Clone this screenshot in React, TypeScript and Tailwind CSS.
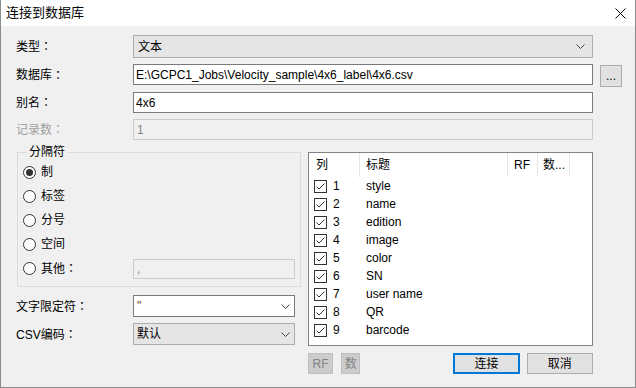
import React from "react";

const Chevron = () => (
  <svg width="9" height="5" viewBox="0 0 9 5" className="shrink-0">
    <path d="M0.5 0.5 L4.5 4.5 L8.5 0.5" fill="none" stroke="#444" strokeWidth="1" />
  </svg>
);

const C = () => <span className="font-['Noto_Sans_CJK_JP',sans-serif]">：</span>;

const Radio = ({ checked }: { checked?: boolean }) => (
  <span className="w-[13px] h-[13px] rounded-full border border-[#333] bg-white flex items-center justify-center shrink-0">
    {checked ? <span className="w-[7px] h-[7px] rounded-full bg-[#333]" /> : null}
  </span>
);

const Check = () => (
  <span className="w-[13px] h-[13px] border border-[#333] bg-white flex items-center justify-center shrink-0">
    <svg width="11" height="11" viewBox="0 0 11 11">
      <path d="M1.5 5.5 L4 8 L9.5 2.5" fill="none" stroke="#333" strokeWidth="1" />
    </svg>
  </span>
);

const rows = ["style", "name", "edition", "image", "color", "SN", "user name", "QR", "barcode"];

export default function App() {
  return (
    <div className="w-[636px] h-[388px] flex flex-col border-x border-b border-[#8c8c8c] bg-[#f0f0f0] text-[12px] text-black overflow-hidden font-['Liberation_Sans','Noto_Sans_CJK_SC',sans-serif]">
      {/* Title bar */}
      <div className="h-[26px] shrink-0 bg-white flex items-center justify-between pl-[5px] pr-[9px]">
        <span className="text-[13px] leading-[16px]">连接到数据库</span>
        <svg width="11" height="11" viewBox="0 0 11 11">
          <path d="M0.5 0.5 L10.5 10.5 M10.5 0.5 L0.5 10.5" stroke="#000" strokeWidth="1" fill="none" />
        </svg>
      </div>

      {/* Body */}
      <div className="flex-1 flex flex-col pl-[15px] pt-[9px]">
        {/* Type */}
        <div className="flex items-center h-[23px]">
          <div className="w-[117px] leading-[16px]">类型<C /></div>
          <div className="w-[460px] h-[23px] bg-[#e5e5e5] border border-[#adadad] flex items-center justify-between pl-[4px] pr-[7px]">
            <span className="leading-[16px]">文本</span>
            <Chevron />
          </div>
        </div>

        {/* Database */}
        <div className="flex items-start h-[22px] mt-[6px]">
          <div className="w-[117px] h-[21px] flex items-center leading-[16px]">数据库<C /></div>
          <div className="w-[460px] h-[21px] bg-white border border-[#7a7a7a] flex items-center pl-[2px]">
            <span className="leading-[16px]">E:\GCPC1_Jobs\Velocity_sample\4x6_label\4x6.csv</span>
          </div>
          <div className="ml-[7px] mt-[1px] w-[22px] h-[22px] bg-[#e1e1e1] border border-[#adadad] flex items-center justify-center leading-[12px]">
            ...
          </div>
        </div>

        {/* Alias */}
        <div className="flex items-center h-[21px] mt-[6px]">
          <div className="w-[117px] leading-[16px]">别名<C /></div>
          <div className="w-[460px] h-[21px] bg-white border border-[#7a7a7a] flex items-center pl-[2px]">
            <span className="leading-[16px]">4x6</span>
          </div>
        </div>

        {/* Record count */}
        <div className="flex items-center h-[21px] mt-[6px]">
          <div className="w-[117px] leading-[16px] text-[#a0a0a0]">记录数<C /></div>
          <div className="w-[460px] h-[21px] bg-[#f0f0f0] border border-[#cccccc] flex items-center pl-[3px]">
            <span className="leading-[16px] text-[#838383]">1</span>
          </div>
        </div>

        {/* Lower */}
        <div className="flex mt-[4px]">
          {/* Left column */}
          <div className="w-[285px] flex flex-col">
            <fieldset className="ml-[1px] w-[284px] border border-[#dcdcdc] pl-[5px] pr-[5px] pb-[6px]">
              <legend className="ml-[4px] px-[2px] leading-[16px]">分隔符</legend>
              <div className="flex items-center h-[24px]">
                <Radio checked />
                <span className="ml-[5px] leading-[16px]">制</span>
              </div>
              <div className="flex items-center h-[24px]">
                <Radio />
                <span className="ml-[5px] leading-[16px]">标签</span>
              </div>
              <div className="flex items-center h-[24px]">
                <Radio />
                <span className="ml-[5px] leading-[16px]">分号</span>
              </div>
              <div className="flex items-center h-[24px]">
                <Radio />
                <span className="ml-[5px] leading-[16px]">空间</span>
              </div>
              <div className="flex items-center h-[24px]">
                <div className="w-[110px] flex items-center">
                  <Radio />
                  <span className="ml-[5px] leading-[16px]">其他<C /></span>
                </div>
                <div className="w-[162px] h-[20px] mt-[2px] bg-[#f0f0f0] border border-[#cccccc] flex items-center pl-[3px]">
                  <span className="leading-[16px] text-[#838383]">,</span>
                </div>
              </div>
            </fieldset>

            <div className="flex items-center h-[22px] mt-[8px]">
              <div className="w-[117px] leading-[16px]">文字限定符<C /></div>
              <div className="w-[162px] h-[22px] bg-white border border-[#7a7a7a] flex items-center justify-between pl-[3px] pr-[4px]">
                <span className="leading-[16px] text-[#5a3a1a]">"</span>
                <Chevron />
              </div>
            </div>
            <div className="flex items-center h-[22px] mt-[6px]">
              <div className="w-[117px] leading-[16px]">CSV编码<C /></div>
              <div className="w-[162px] h-[22px] bg-[#e5e5e5] border border-[#adadad] flex items-center justify-between pl-[3px] pr-[4px]">
                <span className="leading-[16px]">默认</span>
                <Chevron />
              </div>
            </div>
          </div>

          {/* Right column */}
          <div className="ml-[7px] mt-[8px] w-[285px] flex flex-col">
            <div className="h-[194px] bg-white border border-[#828282] flex flex-col">
              <div className="h-[24px] flex">
                <div className="w-[50px] pl-[7px] flex items-center leading-[16px]">列</div>
                <div className="w-[1px] bg-[#e5e5e5]" />
                <div className="w-[147px] pl-[6px] flex items-center leading-[16px]">标题</div>
                <div className="w-[1px] bg-[#e5e5e5]" />
                <div className="w-[29px] pl-[6px] flex items-center leading-[16px]">RF</div>
                <div className="w-[1px] bg-[#e5e5e5]" />
                <div className="w-[31px] pl-[5px] flex items-center leading-[16px]">数...</div>
                <div className="w-[1px] bg-[#e5e5e5]" />
              </div>
              {rows.map((r, i) => (
                <div key={r} className="h-[18px] flex items-center">
                  <div className="w-[51px] pl-[5px] flex items-center">
                    <Check />
                    <span className="ml-[6px] leading-[16px]">{i + 1}</span>
                  </div>
                  <span className="pl-[6px] leading-[16px]">{r}</span>
                </div>
              ))}
            </div>

            <div className="flex items-center mt-[7px] h-[21px]">
              <div className="w-[28px] h-[21px] bg-[#cccccc] border border-[#bfbfbf] text-[#838383] flex items-center justify-center leading-[16px]">RF</div>
              <div className="ml-[8px] w-[21px] h-[21px] bg-[#cccccc] border border-[#bfbfbf] text-[#838383] flex items-center justify-center leading-[16px]">数</div>
              <div className="ml-[93px] w-[74px] h-[21px] bg-[#e1e1e1] border-2 border-[#0078d7] flex items-center justify-center leading-[16px]">连接</div>
              <div className="ml-[7px] w-[74px] h-[21px] bg-[#e1e1e1] border border-[#adadad] flex items-center justify-center leading-[16px]">取消</div>
            </div>
          </div>
        </div>
      </div>
    </div>
  );
}
